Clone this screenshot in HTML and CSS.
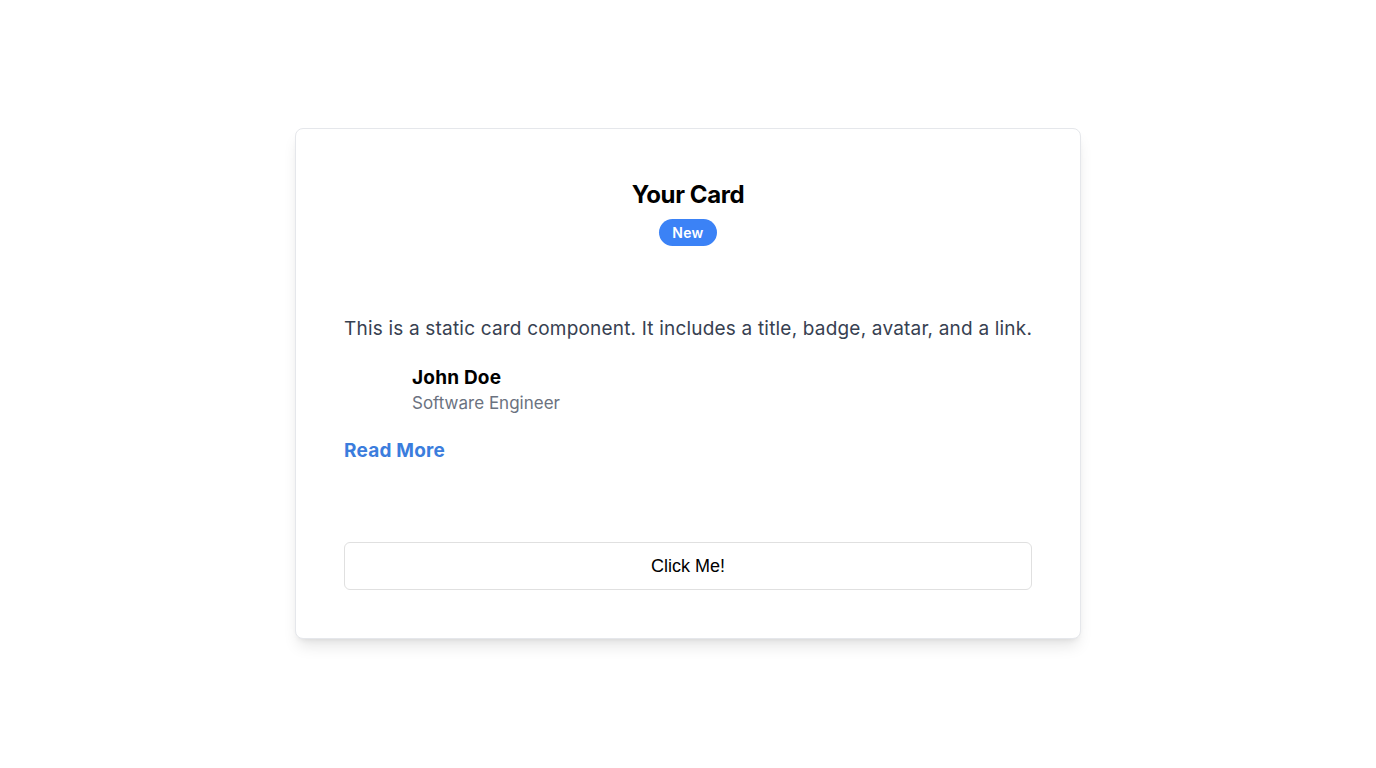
FILE: index.html
```html
<!DOCTYPE html>
<html lang="en">
<head>
<meta charset="utf-8">
<title>Your Card</title>
<link rel="stylesheet" href="styles.css">
</head>
<body>
<main class="page">
  <section class="card">
    <header class="card-header">
      <h2 class="card-title">Your Card</h2>
      <span class="badge">New</span>
    </header>
    <div class="card-content">
      <p class="desc">This is a static card component. It includes a title, badge, avatar, and a link.</p>
      <div class="person">
        <div class="avatar"></div>
        <div class="person-info">
          <div class="name">John Doe</div>
          <div class="role">Software Engineer</div>
        </div>
      </div>
      <a class="link" href="#">Read More</a>
    </div>
    <footer class="card-footer">
      <button class="btn" type="button">Click Me!</button>
    </footer>
  </section>
</main>
</body>
</html>
```
FILE: styles.css
```css
* { box-sizing: border-box; }
html, body { margin: 0; padding: 0; background: #ffffff; }
body { font-family: Inter, "Liberation Sans", sans-serif; color: #000; }
.page {
  min-height: 767px;
  display: flex;
  align-items: center;
  justify-content: center;
}
.card {
  width: 786px;
  height: 511px;
  border: 1px solid #e5e7eb;
  border-radius: 8px;
  background: #fff;
  padding: 48px;
  box-shadow: 0 10px 15px -3px rgba(0,0,0,0.1), 0 4px 6px -4px rgba(0,0,0,0.1);
  display: flex;
  flex-direction: column;
}
.card-header {
  display: flex;
  flex-direction: column;
  align-items: center;
}
.card-title {
  margin: 0;
  padding-top: 2px;
  font-size: 24px;
  line-height: 32px;
  font-weight: 700;
  letter-spacing: -0.4px;
}
.badge {
  margin-top: 8px;
  display: inline-block;
  background: #3b82f6;
  color: #fff;
  font-size: 14px;
  font-weight: 600;
  line-height: 19px;
  letter-spacing: 0.3px;
  padding: 4px 13px;
  border-radius: 9999px;
}
.card-content {
  margin-top: 69px;
  display: flex;
  flex-direction: column;
}
.desc {
  margin: 0;
  font-size: 19px;
  letter-spacing: 0.19px;
  line-height: 28px;
  color: #374151;
  white-space: nowrap;
}
.person {
  margin-top: 22px;
  display: flex;
  align-items: center;
  gap: 20px;
}
.avatar {
  width: 48px;
  height: 48px;
  border-radius: 50%;
}
.name {
  font-size: 19px;
  letter-spacing: 0.2px;
  font-weight: 700;
  line-height: 26px;
}
.role {
  font-size: 17px;
  line-height: 24px;
  color: #6b7280;
}
.link {
  margin-top: 22px;
  align-self: flex-start;
  font-size: 19px;
  letter-spacing: 0.2px;
  font-weight: 700;
  line-height: 28px;
  color: #3b7ddd;
  text-decoration: none;
}
.card-footer {
  margin-top: auto;
}
.btn {
  width: 100%;
  height: 48px;
  background: #fff;
  border: 1px solid #e0e0e0;
  border-radius: 6px;
  font-family: "Liberation Sans", Arial, sans-serif;
  font-size: 18px;
  color: #000;
}
```
